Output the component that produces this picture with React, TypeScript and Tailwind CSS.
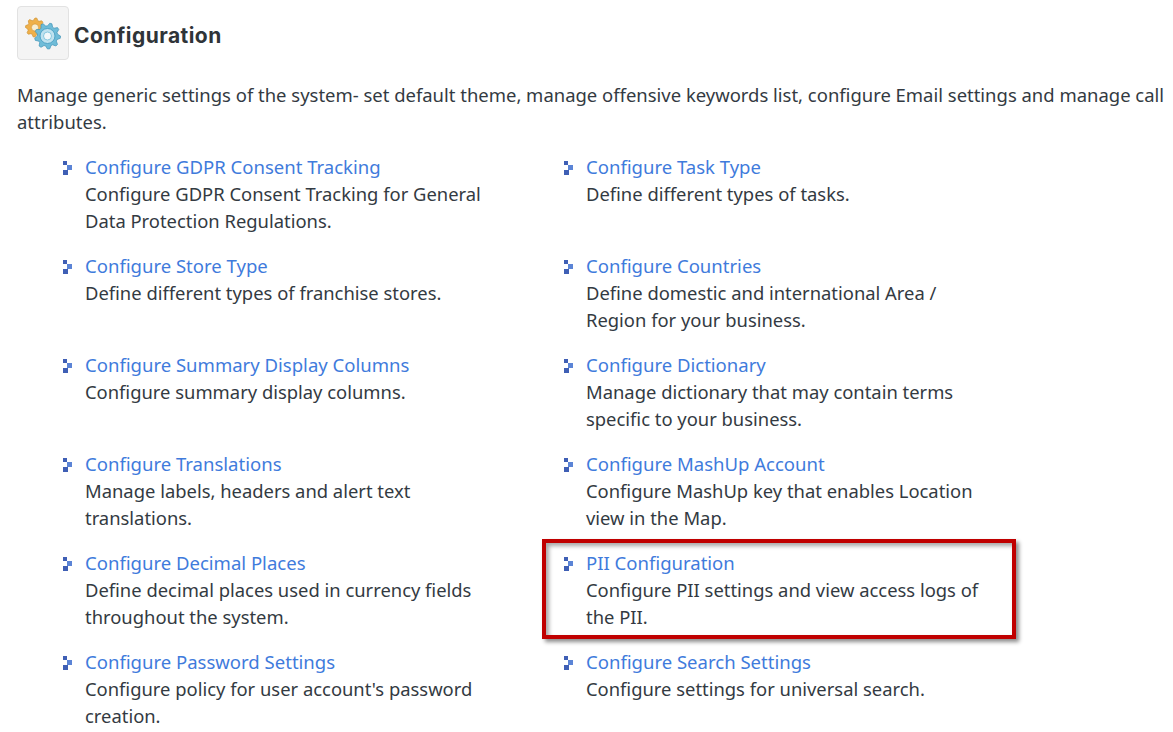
import React from 'react';

type Item = { title: string; lines: string[] };

const rows: [Item, Item][] = [
  [
    { title: 'Configure GDPR Consent Tracking', lines: ['Configure GDPR Consent Tracking for General', 'Data Protection Regulations.'] },
    { title: 'Configure Task Type', lines: ['Define different types of tasks.'] },
  ],
  [
    { title: 'Configure Store Type', lines: ['Define different types of franchise stores.'] },
    { title: 'Configure Countries', lines: ['Define domestic and international Area /', 'Region for your business.'] },
  ],
  [
    { title: 'Configure Summary Display Columns', lines: ['Configure summary display columns.'] },
    { title: 'Configure Dictionary', lines: ['Manage dictionary that may contain terms', 'specific to your business.'] },
  ],
  [
    { title: 'Configure Translations', lines: ['Manage labels, headers and alert text', 'translations.'] },
    { title: 'Configure MashUp Account', lines: ['Configure MashUp key that enables Location', 'view in the Map.'] },
  ],
  [
    { title: 'Configure Decimal Places', lines: ['Define decimal places used in currency fields', 'throughout the system.'] },
    { title: 'PII Configuration', lines: ['Configure PII settings and view access logs of', 'the PII.'] },
  ],
  [
    { title: 'Configure Password Settings', lines: ["Configure policy for user account's password", 'creation.'] },
    { title: 'Configure Search Settings', lines: ['Configure settings for universal search.'] },
  ],
];

const Bullet = () => (
  <svg width="11" height="15" viewBox="0 0 11 15" className="shrink-0 mt-[8px]">
    <rect x="1" y="0" width="4" height="4" fill="#3f5fb5" />
    <rect x="5" y="4" width="5" height="5" fill="#5b84d6" />
    <rect x="1" y="9" width="5" height="5" fill="#3f5fb5" />
  </svg>
);

const gearPath = (cx: number, cy: number, r: number, teeth: number) => {
  const pts: string[] = [];
  for (let i = 0; i < teeth * 4; i++) {
    const a = (i / (teeth * 4)) * Math.PI * 2;
    const rad = i % 4 < 2 ? r : r * 0.78;
    pts.push(`${(cx + Math.cos(a) * rad).toFixed(1)},${(cy + Math.sin(a) * rad).toFixed(1)}`);
  }
  return pts.join(' ');
};

const GearIcon = () => (
  <div className="w-[52px] h-[54px] rounded-[4px] border border-[#e2e2e2] bg-[#f4f4f4] flex items-center justify-center">
    <svg width="38" height="34" viewBox="0 0 38 34">
      <polygon points={gearPath(11, 11.5, 9.5, 8)} fill="#efb04a" stroke="#cf9232" strokeWidth="0.7" strokeLinejoin="round" />
      <circle cx="11" cy="11.5" r="3.6" fill="#f8edd2" stroke="#cf9232" strokeWidth="0.6" />
      <polygon points={gearPath(23.5, 20, 13, 9)} fill="#6fbcd8" stroke="#3f93b8" strokeWidth="0.7" strokeLinejoin="round" />
      <circle cx="23.5" cy="20" r="7.5" fill="#bfe2ef" stroke="#4fa3c6" strokeWidth="1" />
      <circle cx="23.5" cy="20" r="4" fill="#f3f8fa" stroke="#6fbcd8" strokeWidth="0.8" />
    </svg>
  </div>
);

const Entry = ({ item }: { item: Item }) => (
  <div className="flex w-[501px] h-[99px]">
    <div className="w-[23px]">
      <Bullet />
    </div>
    <div className="w-[420px]">
      <div className="text-[#3f7bdc] text-[18.55px]">{item.title}</div>
      {item.lines.map((l) => (
        <div key={l}>{l}</div>
      ))}
    </div>
  </div>
);

export default function App() {
  return (
    <div
      className="relative w-[1173px] h-[732px] overflow-hidden bg-white text-[#333a42] text-[18.4px] leading-[27px]"
      style={{ fontFamily: '"Noto Sans", sans-serif' }}
    >
      <div className="flex items-center gap-[5px] pl-[17px] pt-[6px]">
        <GearIcon />
        <h1
          className="text-[21px] font-bold text-[#2f3438] leading-[27px] tracking-[0.45px] mt-[4px]"
          style={{ fontFamily: 'Inter, sans-serif' }}
        >
          Configuration
        </h1>
      </div>
      <p className="pl-[17px] pt-[21px] w-[1173px] whitespace-nowrap text-[18.47px]">
        Manage generic settings of the system- set default theme, manage offensive keywords list, configure Email settings and manage call
        <br />
        attributes.
      </p>
      <div className="pl-[62px] pt-[18px]">
        {rows.map(([a, b]) => (
          <div key={a.title} className="flex">
            <Entry item={a} />
            <Entry item={b} />
          </div>
        ))}
      </div>
      <div className="absolute left-[542px] top-[539px] w-[474px] h-[100px] border-[4px] border-[#c00000] shadow-[3px_3px_4px_rgba(0,0,0,0.45),inset_3px_3px_4px_rgba(0,0,0,0.35)]" />
    </div>
  );
}
